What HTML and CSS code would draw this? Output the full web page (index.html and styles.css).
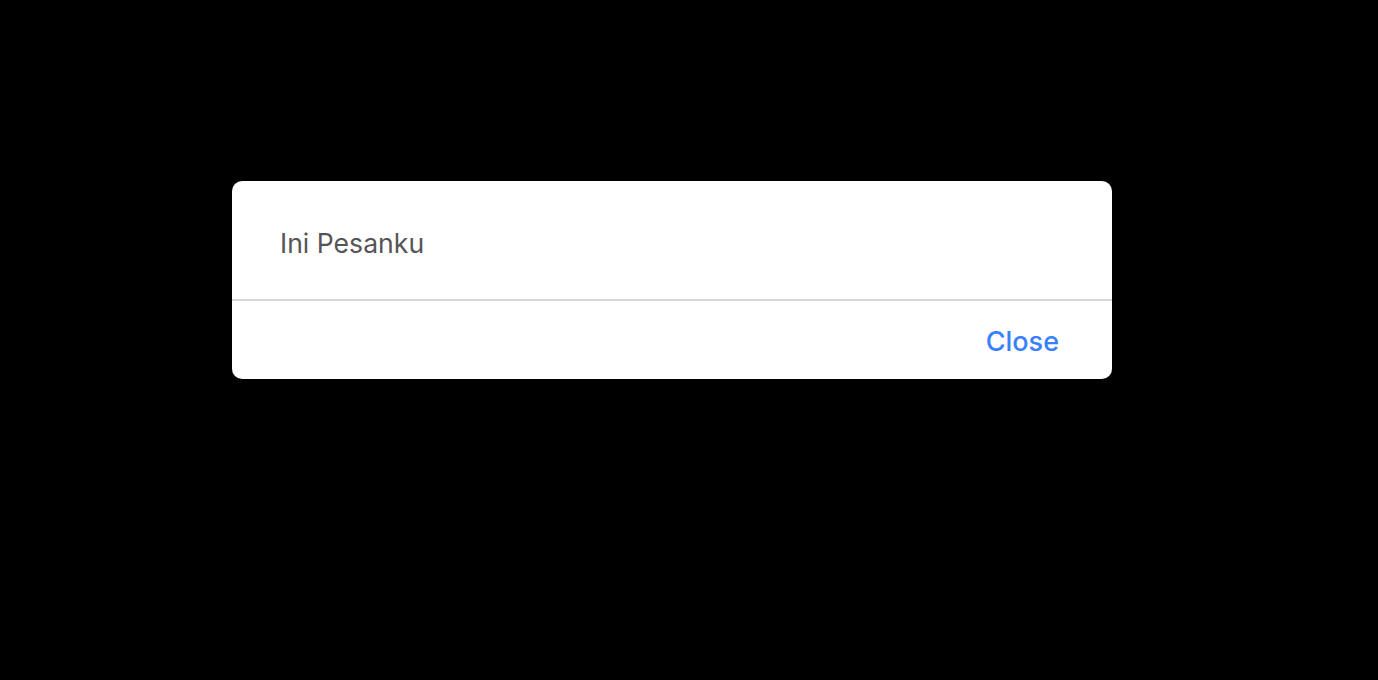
FILE: index.html
```html
<!DOCTYPE html>
<html>
<head>
<meta charset="utf-8">
<link rel="stylesheet" href="styles.css">
</head>
<body>
<div class="page">
  <div class="alert">
    <div class="message">Ini Pesanku</div>
    <div class="buttons">
      <button class="btn">Close</button>
    </div>
  </div>
</div>
</body>
</html>
```
FILE: styles.css
```css
html, body {
  margin: 0;
  padding: 0;
  background: #000;
  height: 100%;
}
.page {
  padding: 181px 0 0 232px;
}
.alert {
  width: 880px;
  background: #fff;
  border-radius: 10px;
  overflow: hidden;
  font-family: Inter, "Noto Sans", sans-serif;
}
.message {
  height: 112px;
  padding-top: 6px;
  padding-left: 48px;
  display: flex;
  align-items: center;
  font-size: 26.6px;
  color: #555;
  border-bottom: 2px solid #d8d8d8;
}
.buttons {
  height: 78px;
  box-sizing: border-box;
  padding-top: 3px;
  display: flex;
  justify-content: flex-end;
  align-items: center;
  padding-right: 53px;
}
.btn {
  border: 0;
  background: none;
  padding: 0;
  font-family: Inter, "Noto Sans", sans-serif;
  font-size: 27px;
  font-weight: 500;
  color: #3880ff;
}
```
